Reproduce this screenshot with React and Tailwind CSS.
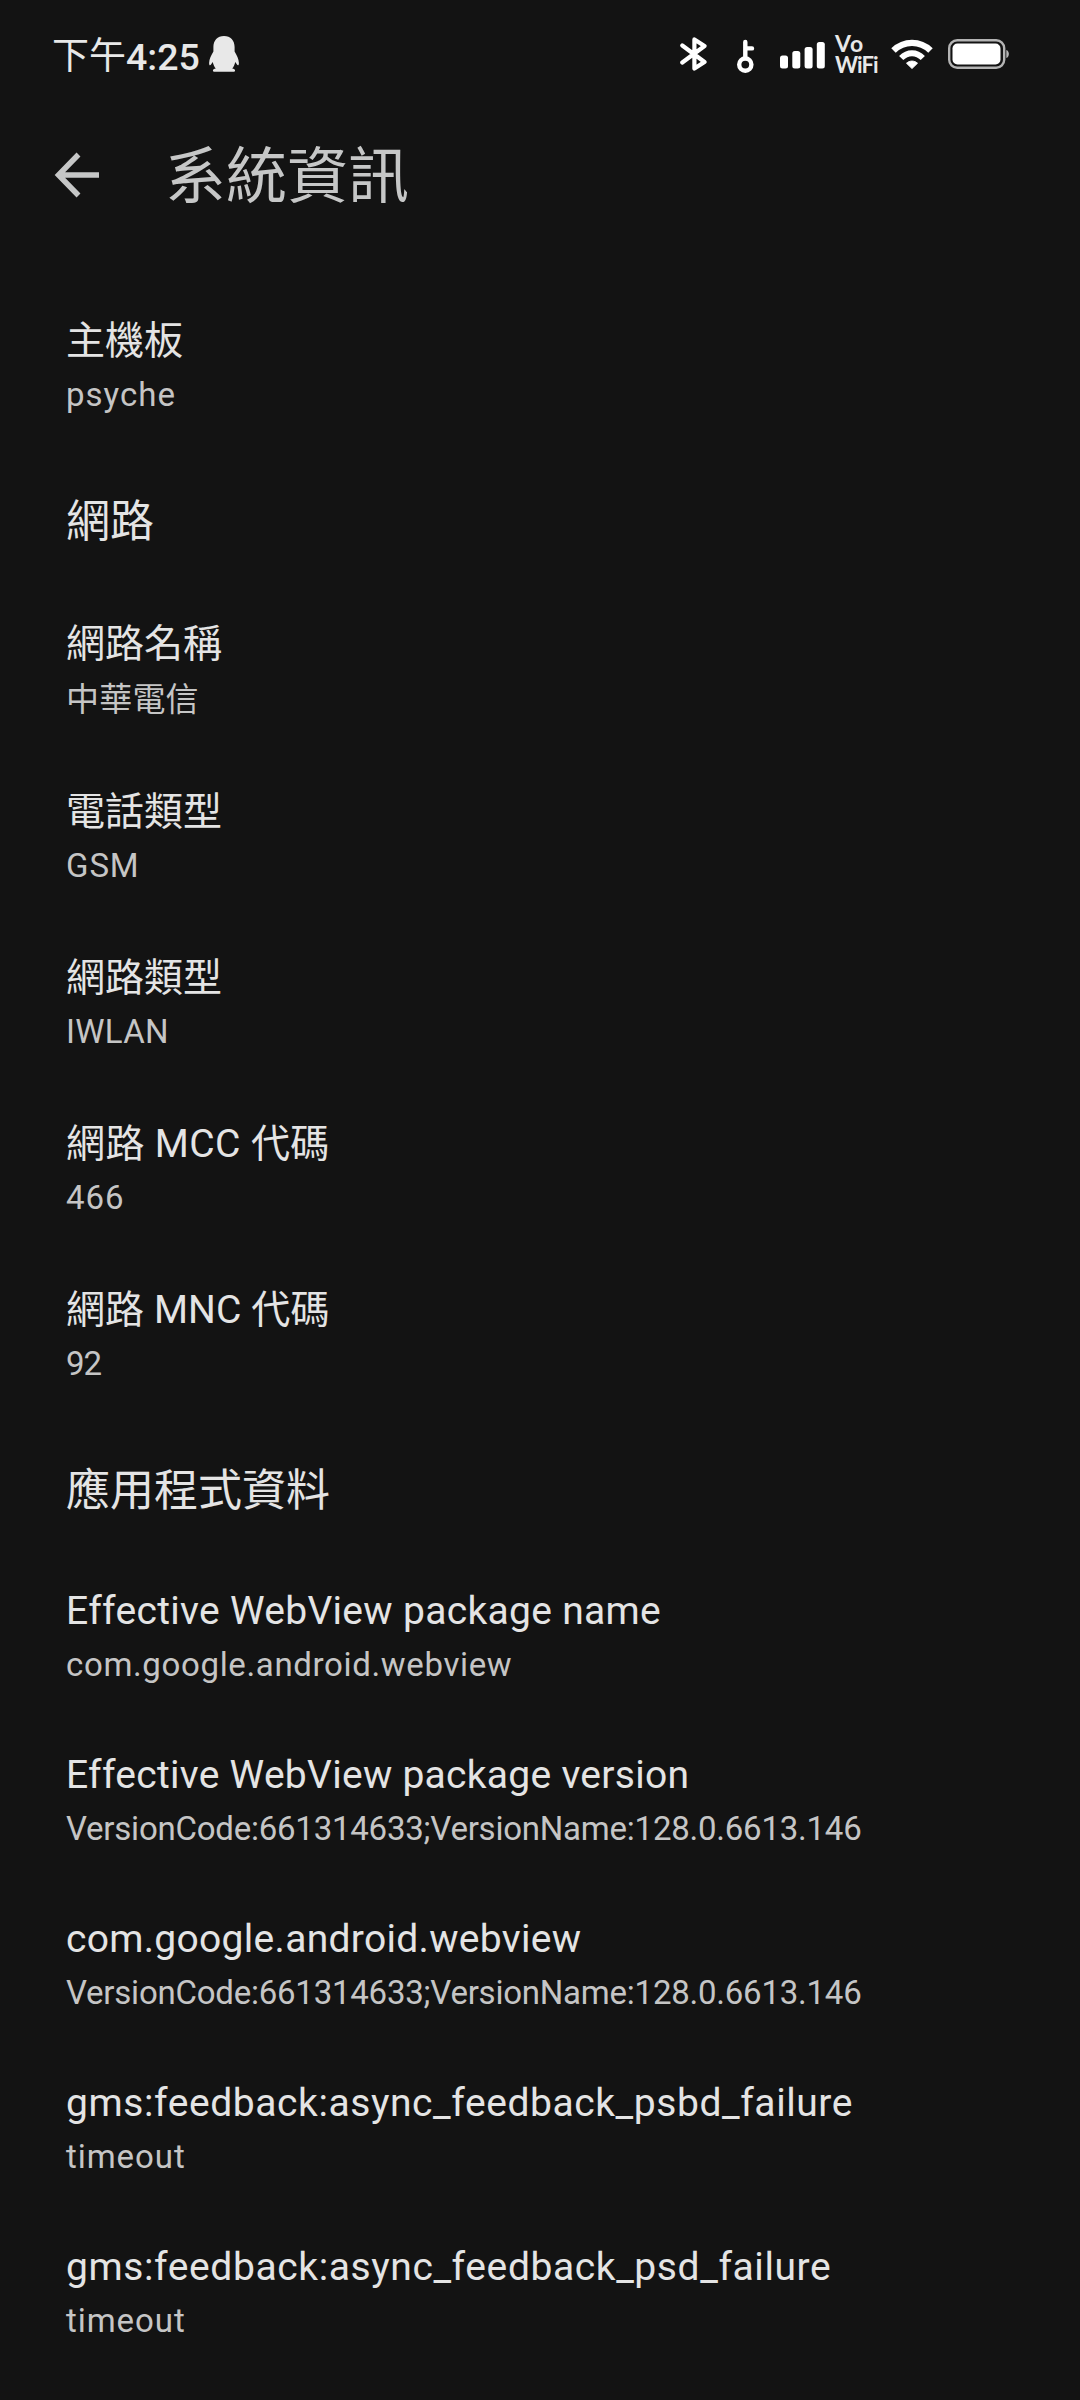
const deviceItems = [
  { title: '主機板', value: 'psyche', cjk: true, valueClass: 'tracking-[1px]' },
];

const networkItems = [
  { title: '網路名稱', value: '中華電信', cjk: true, cjkValue: true, valueClass: 'tracking-[0.2px]' },
  { title: '電話類型', value: 'GSM', cjk: true, valueClass: 'tracking-[0.9px]' },
  { title: '網路類型', value: 'IWLAN', cjk: true, valueClass: 'tracking-[0.3px]' },
  { title: '網路 MCC 代碼', value: '466', cjk: true, titleClass: 'tracking-[0.4px]', valueClass: 'tracking-[1px]' },
  { title: '網路 MNC 代碼', value: '92', cjk: true, titleClass: 'tracking-[0.1px]', valueClass: 'tracking-[-1px]' },
];

const appItems = [
  {
    title: 'Effective WebView package name',
    value: 'com.google.android.webview',
    titleClass: 'tracking-[0.31px]',
    valueClass: 'tracking-[0.65px]',
  },
  {
    title: 'Effective WebView package version',
    value: 'VersionCode:661314633;VersionName:128.0.6613.146',
    titleClass: 'tracking-[0.28px]',
    valueClass: 'tracking-[-0.23px]',
  },
  {
    title: 'com.google.android.webview',
    value: 'VersionCode:661314633;VersionName:128.0.6613.146',
    titleClass: 'tracking-[0.3px]',
    valueClass: 'tracking-[-0.23px]',
  },
  {
    title: 'gms:feedback:async_feedback_psbd_failure',
    value: 'timeout',
    titleClass: 'tracking-[0.58px]',
    valueClass: 'tracking-[0.95px]',
  },
  {
    title: 'gms:feedback:async_feedback_psd_failure',
    value: 'timeout',
    titleClass: 'tracking-[0.6px]',
    valueClass: 'tracking-[0.95px]',
  },
];

function PenguinIcon() {
  return (
    <svg className="h-9 w-[30px]" viewBox="0 0 30 36" fill="#e8e8e8" aria-hidden="true">
      <path d="M15 0C8.4 0 4.4 4.6 4.4 11v4.6C2.4 19 .2 23 .1 27c0 2.7 1 3 2.1 1.3l1.5-2.3c.6 2.5 1.6 4.8 3.1 6.6-1.7.4-2.9 1-2.9 1.8 0 1 .8 1.4 2 1.4h18.2c1.2 0 2-.4 2-1.4 0-.8-1.2-1.4-2.9-1.8 1.5-1.8 2.5-4.1 3.1-6.6l1.5 2.3c1.1 1.7 2.1 1.4 2.1-1.3-.1-4-2.3-8-4.3-11.4V11C25.6 4.6 21.6 0 15 0z" />
    </svg>
  );
}

function BluetoothIcon() {
  return (
    <svg className="h-[34px] w-[27px]" viewBox="0 0 27 34" fill="none" stroke="#fff" strokeWidth="4.2" strokeLinecap="round" strokeLinejoin="round" aria-hidden="true">
      <path d="M2.3 8.5L24.5 25L14.4 31.6V2.4L24.5 9L2.3 25.5" />
    </svg>
  );
}

function KeyIcon() {
  return (
    <svg className="h-[34px] w-[18px]" viewBox="0 0 18 34" fill="none" stroke="#fff" strokeWidth="4.4" strokeLinecap="round" aria-hidden="true">
      <circle cx="8.3" cy="25.6" r="6.1" />
      <path d="M8.3 19V3M8.3 9.4H15" />
    </svg>
  );
}

function SignalIcon() {
  return (
    <svg className="h-[27px] w-[45px]" viewBox="0 0 45 27" fill="#fff" aria-hidden="true">
      <rect x="0" y="13.5" width="8" height="13" rx="2.5" />
      <rect x="12.3" y="9" width="8" height="17.5" rx="2.5" />
      <rect x="24.6" y="5" width="8" height="21.5" rx="2.5" />
      <rect x="36.8" y="0" width="8" height="26.5" rx="2.5" />
    </svg>
  );
}

function WifiIcon() {
  return (
    <svg className="h-[30px] w-[42px]" viewBox="0 0 42 30" aria-hidden="true">
      <path d="M2.5 11.5C13 1.3 29 1.3 39.5 11.5" fill="none" stroke="#fff" strokeWidth="6.4" />
      <path d="M10.2 19C16.5 12.7 25.5 12.7 31.8 19" fill="none" stroke="#fff" strokeWidth="6" />
      <path d="M15.5 24.2c3.3-2.8 7.7-2.8 11 0L21 29.5z" fill="#fff" stroke="#fff" strokeLinejoin="round" />
    </svg>
  );
}

function BatteryIcon() {
  return (
    <svg className="h-[30px] w-[62px]" viewBox="0 0 62 30" aria-hidden="true">
      <rect x="1.2" y="1.2" width="55" height="27.6" rx="8" fill="none" stroke="#b4b4b4" strokeWidth="2.4" />
      <rect x="4.5" y="4.5" width="48" height="21" rx="5" fill="#fff" />
      <path d="M58.3 11c3.4 1 3.4 7 0 8z" fill="#b4b4b4" />
    </svg>
  );
}

function StatusBar() {
  return (
    <div className="flex h-[108px] items-center justify-between pl-[52px] pr-[70px]">
      <div className="flex items-center leading-[42px] text-[#e8e8e8]">
        <span className="pt-[6px] text-[37px]">下午</span>
        <span className="pt-[5px] text-[37.5px] font-medium">4:25</span>
        <span className="ml-[9px]">
          <PenguinIcon />
        </span>
      </div>
      <div className="flex items-center">
        <BluetoothIcon />
        <span className="ml-[30px] pt-[3px]">
          <KeyIcon />
        </span>
        <span className="ml-[25px] pt-[2px]">
          <SignalIcon />
        </span>
        <div className="ml-[10px] flex w-[44px] flex-col whitespace-nowrap font-['Lato',sans-serif] text-[22px] font-bold leading-[21px] text-[#e8e8e8]">
          <span className="text-[23px] tracking-[0.8px]">Vo</span>
          <span className="tracking-[-1px]">WiFi</span>
        </div>
        <span className="ml-3">
          <WifiIcon />
        </span>
        <span className="ml-[15px]">
          <BatteryIcon />
        </span>
      </div>
    </div>
  );
}

function Header() {
  return (
    <header className="flex h-[134px] items-center pl-[54px] text-[#c6c7c7]">
      <svg className="h-[46px] w-[46px]" viewBox="0 0 46 46" fill="none" stroke="currentColor" strokeWidth="5.5" aria-hidden="true">
        <path d="M45 23H5M24.5 2.5L4.5 23L24.5 43.5" />
      </svg>
      <h1 className="ml-[65px] pt-1 text-[61px] leading-[72px]">系統資訊</h1>
    </header>
  );
}

function InfoItem({ title, value, cjk, cjkValue, titleClass = '', valueClass = '' }) {
  return (
    <div className="py-[31px] whitespace-nowrap">
      <div className={`text-[39px] text-[#e4e4e4] ${cjk ? 'h-[54px] leading-[57px]' : 'h-[52px] leading-[52px]'} ${titleClass}`}>
        {title}
      </div>
      <div className={`mt-1.5 text-[33px] text-[#c5c5c5] ${cjkValue ? 'h-[46px] leading-[48px]' : 'h-[44px] leading-[44px]'} ${valueClass}`}>
        {value}
      </div>
    </div>
  );
}

function Section({ heading, items }) {
  return (
    <section>
      {heading && (
        <h2 className="h-[137px] pt-[42px] text-[44px] leading-[64px] text-[#e4e4e4]">{heading}</h2>
      )}
      {items.map((item) => (
        <InfoItem key={item.title} {...item} />
      ))}
    </section>
  );
}

export default function App() {
  return (
    <div lang="zh-TW" className="h-[2400px] w-[1080px] overflow-hidden bg-[#131313] font-['Roboto','Noto_Sans_CJK_TC',sans-serif]">
      <StatusBar />
      <Header />
      <main className="pl-[66px] pt-10">
        <Section items={deviceItems} />
        <Section heading="網路" items={networkItems} />
        <Section heading="應用程式資料" items={appItems} />
      </main>
    </div>
  );
}
